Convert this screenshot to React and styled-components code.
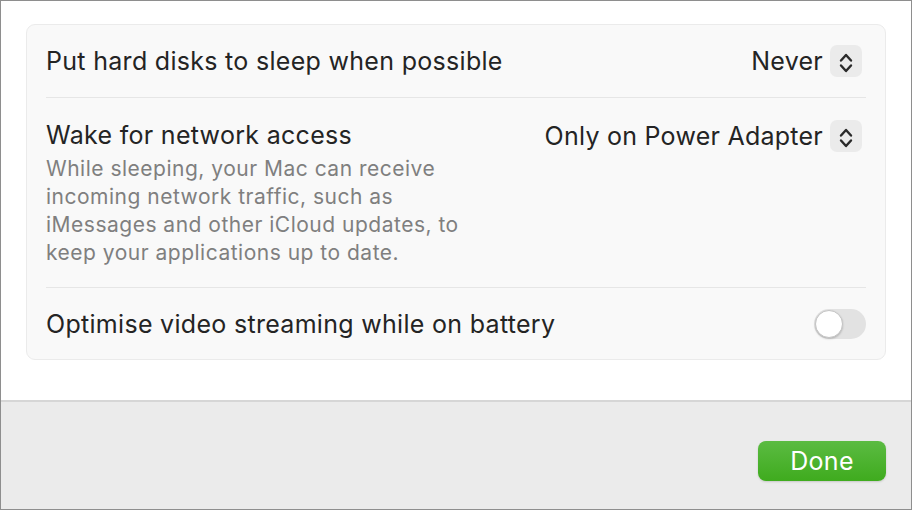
import React from "react";
import styled, { createGlobalStyle } from "styled-components";

const GlobalStyle = createGlobalStyle`
  html, body {
    margin: 0;
    padding: 0;
    background: #ffffff;
  }
  * {
    box-sizing: border-box;
  }
`;

const Window = styled.div`
  width: 912px;
  height: 510px;
  border: 1px solid #8e8e8e;
  display: flex;
  flex-direction: column;
  font-family: Inter, "Noto Sans", sans-serif;
  color: #242424;
  overflow: hidden;
`;

const Content = styled.main`
  flex: 1;
  background: #ffffff;
  padding: 23px 25px 0;
`;

const Card = styled.section`
  background: #f9f9f9;
  border: 1px solid #ebebeb;
  border-radius: 9px;
  padding: 0 19px;
`;

const Row = styled.div`
  display: flex;
  justify-content: space-between;
  align-items: ${(p) => (p.$top ? "flex-start" : "center")};
  min-height: ${(p) => p.$height}px;
  padding: ${(p) => p.$pad || "0"};
  border-top: ${(p) => (p.$divider ? "1px solid #e6e6e6" : "none")};
`;

const TextBlock = styled.div`
  display: flex;
  flex-direction: column;
`;

const Label = styled.span`
  font-size: 25px;
  line-height: 30px;
  letter-spacing: 0.3px;
`;

const Description = styled.p`
  margin: 5px 0 0;
  width: 440px;
  font-size: 21px;
  line-height: 28px;
  color: #7f7f7f;
  letter-spacing: 0.5px;
`;

const Select = styled.div`
  display: flex;
  align-items: center;
  gap: 7px;
  margin-right: 4px;
  font-size: 25px;
  letter-spacing: 0.25px;
`;

const Stepper = styled.span`
  width: 32px;
  height: 32px;
  border-radius: 7px;
  background: #ebebeb;
  display: flex;
  align-items: center;
  justify-content: center;
`;

const Toggle = styled.span`
  width: 52px;
  height: 30px;
  border-radius: 15px;
  background: #e2e2e2;
  display: flex;
  align-items: center;
  padding: 0 1px;
`;

const Knob = styled.span`
  width: 28px;
  height: 28px;
  border-radius: 50%;
  background: #ffffff;
  border: 1px solid #c4c4c4;
  box-shadow: 0 1px 2px rgba(0, 0, 0, 0.2);
`;

const Footer = styled.footer`
  height: 109px;
  background: #ebebeb;
  border-top: 2px solid #d6d6d6;
  display: flex;
  justify-content: flex-end;
  align-items: flex-start;
  padding: 39px 25px 0 0;
`;

const DoneButton = styled.button`
  width: 128px;
  height: 40px;
  border: none;
  border-radius: 8px;
  background: linear-gradient(#5bbb42, #3fab1e);
  color: #ffffff;
  font-family: Inter, "Noto Sans", sans-serif;
  font-size: 25px;
  letter-spacing: 0.3px;
  box-shadow: 0 1px 2px rgba(0, 0, 0, 0.15);
  padding: 0;
`;

const Chevrons = () => (
  <svg width="32" height="32" viewBox="0 0 32 32" fill="none">
    <path
      d="M11 15.5 L16 10 L21 15.5 M11 20.5 L16 26 L21 20.5"
      stroke="#2a2a2a"
      strokeWidth="2.4"
      strokeLinecap="round"
      strokeLinejoin="round"
    />
  </svg>
);

const PopUp = ({ value }) => (
  <Select>
    {value}
    <Stepper>
      <Chevrons />
    </Stepper>
  </Select>
);

export default function App() {
  return (
    <>
      <GlobalStyle />
      <Window>
        <Content>
          <Card>
            <Row $height={72}>
              <Label>Put hard disks to sleep when possible</Label>
              <PopUp value="Never" />
            </Row>
            <Row $divider $top $height={190} $pad="22px 0 0">
              <TextBlock>
                <Label>Wake for network access</Label>
                <Description>
                  While sleeping, your Mac can receive incoming network
                  traffic, such as iMessages and other iCloud updates, to
                  keep your applications up to date.
                </Description>
              </TextBlock>
              <PopUp value="Only on Power Adapter" />
            </Row>
            <Row $divider $height={72}>
              <Label>Optimise video streaming while on battery</Label>
              <Toggle>
                <Knob />
              </Toggle>
            </Row>
          </Card>
        </Content>
        <Footer>
          <DoneButton>Done</DoneButton>
        </Footer>
      </Window>
    </>
  );
}
